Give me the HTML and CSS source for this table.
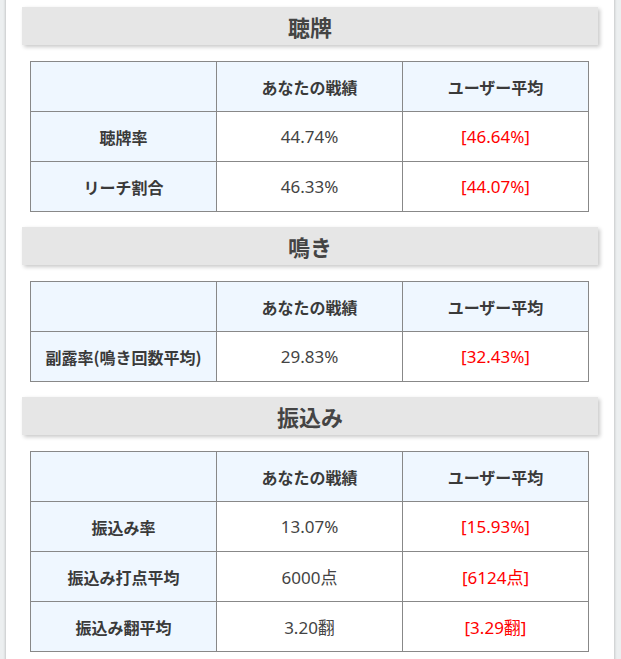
FILE: index.html
```html
<!DOCTYPE html>
<html lang="ja">
<head>
<meta charset="utf-8">
<link rel="stylesheet" href="styles.css">
</head>
<body>
<div class="page">
  <h2 class="sec-title">聴牌</h2>
  <table class="stats">
    <tr><th class="corner"></th><th>あなたの戦績</th><th>ユーザー平均</th></tr>
    <tr><th>聴牌率</th><td>44.74%</td><td class="avg">[46.64%]</td></tr>
    <tr><th>リーチ割合</th><td>46.33%</td><td class="avg">[44.07%]</td></tr>
  </table>

  <h2 class="sec-title">鳴き</h2>
  <table class="stats">
    <tr><th class="corner"></th><th>あなたの戦績</th><th>ユーザー平均</th></tr>
    <tr><th>副露率(鳴き回数平均)</th><td>29.83%</td><td class="avg">[32.43%]</td></tr>
  </table>

  <h2 class="sec-title">振込み</h2>
  <table class="stats">
    <tr><th class="corner"></th><th>あなたの戦績</th><th>ユーザー平均</th></tr>
    <tr><th>振込み率</th><td>13.07%</td><td class="avg">[15.93%]</td></tr>
    <tr><th>振込み打点平均</th><td>6000点</td><td class="avg">[6124点]</td></tr>
    <tr><th>振込み翻平均</th><td>3.20翻</td><td class="avg">[3.29翻]</td></tr>
  </table>
</div>
</body>
</html>
```
FILE: styles.css
```css
html, body {
  margin: 0;
  padding: 0;
}
body {
  background: #eceff0;
  font-family: "Noto Sans", "Noto Sans CJK JP", sans-serif;
  color: #444;
  overflow: hidden;
}
.page {
  width: 576px;
  margin: -10px 0 0 6px;
  padding: 17px 16px 40px;
  background: #fff;
  box-shadow: 0 0 3px rgba(0, 0, 0, 0.28);
}
.sec-title {
  margin: 0 0 16px;
  height: 38px;
  line-height: 38px;
  background: #e6e6e6;
  box-shadow: 2px 2px 4px rgba(0, 0, 0, 0.22);
  text-align: center;
  font-family: "Noto Sans CJK JP", sans-serif;
  font-size: 22px;
  font-weight: 700;
  color: #444;
}
.stats {
  width: 559px;
  margin: 0 0 15px 8px;
  border-collapse: collapse;
  table-layout: fixed;
}
.stats th, .stats td {
  height: 49px;
  padding: 0;
  border: 1px solid #888;
  text-align: center;
  vertical-align: middle;
}
.stats th {
  background: #eff7ff;
  font-family: "Noto Sans CJK JP", sans-serif;
  font-size: 16px;
  font-weight: 700;
  color: #3a3a3a;
}
.stats td {
  background: #fff;
  font-size: 17px;
  color: #444;
}
.stats td.avg {
  color: #f00;
}
```
